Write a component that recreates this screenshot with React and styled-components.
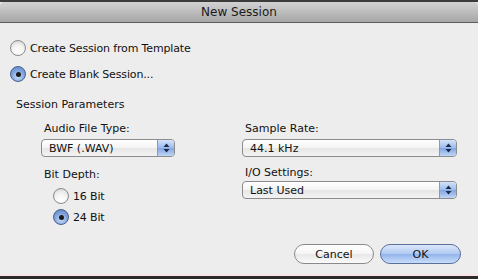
import styled, { createGlobalStyle } from "styled-components";

const GlobalStyle = createGlobalStyle`
  html, body { margin: 0; padding: 0; background: #ededed; }
  body { font-family: "DejaVu Sans", "Liberation Sans", sans-serif; }
`;

const Window = styled.div`
  width: 478px;
  height: 279px;
  display: flex;
  flex-direction: column;
  background: #ededed;
  overflow: hidden;
`;

const TopStrip = styled.div`
  height: 2px;
  background: #3c3c3c;
`;

const TitleBar = styled.div`
  height: 20px;
  display: flex;
  align-items: center;
  justify-content: center;
  background: linear-gradient(#d2d2d2, #a7a7a7);
  border-bottom: 1px solid #5c5c5c;
  border-radius: 4px 4px 0 0;
  font-size: 12px;
  color: #1a1a1a;
`;

const Body = styled.div`
  flex: 1;
  display: flex;
  flex-direction: column;
  padding: 17px 17px 0 10px;
`;

const RadioRow = styled.label`
  display: flex;
  align-items: center;
  gap: 4px;
  height: 16px;
  margin-bottom: ${(p) => p.mb || 0}px;
  font-size: 11px;
  letter-spacing: -0.15px;
  color: #111;
`;

const Radio = styled.span`
  width: 14px;
  height: 14px;
  border-radius: 50%;
  border: 1px solid ${(p) => (p.on ? "#4a5f8a" : "#8a8a8a")};
  background: ${(p) =>
    p.on
      ? "radial-gradient(circle at 50% 70%, #c4dcf8 0%, #7fa2de 55%, #5a80c6 100%)"
      : "radial-gradient(circle at 50% 75%, #ffffff 0%, #f2f2f2 50%, #cfcfcf 100%)"};
  display: flex;
  align-items: center;
  justify-content: center;
  flex-shrink: 0;
  &::after {
    content: "";
    width: 5px;
    height: 5px;
    border-radius: 50%;
    background: #1b1b1b;
    display: ${(p) => (p.on ? "block" : "none")};
  }
`;

const SectionLabel = styled.div`
  margin: 16px 0 0 6px;
  height: 14px;
  line-height: 14px;
  font-size: 11px;
  color: #111;
`;

const Columns = styled.div`
  display: grid;
  grid-template-columns: 134px 215px;
  column-gap: 67px;
  margin: 10px 0 0 31px;
`;

const Column = styled.div`
  display: flex;
  flex-direction: column;
`;

const FieldLabel = styled.div`
  height: 14px;
  line-height: 14px;
  margin: ${(p) => p.mt || 0}px 0 ${(p) => (p.mb ?? 3)}px 3px;
  font-size: 11px;
  color: #111;
`;

const Select = styled.div`
  height: 16px;
  display: flex;
  align-items: center;
  border: 1px solid #8c8c8c;
  border-radius: 4px;
  background: linear-gradient(#ffffff, #f4f4f4 50%, #e6e6e6 51%, #f3f3f3);
  overflow: hidden;
`;

const SelectText = styled.span`
  flex: 1;
  padding-left: 7px;
  font-size: 11px;
  color: #111;
`;

const Stepper = styled.span`
  width: 16px;
  height: 100%;
  border-left: 1px solid #8799be;
  background: linear-gradient(#d3e3f9, #9bbaec 50%, #80a5e2 51%, #c0d6f6);
  display: flex;
  align-items: center;
  justify-content: center;
`;

const Options = styled.div`
  display: flex;
  flex-direction: column;
  gap: 5px;
  margin: 3px 0 0 12px;
`;

const ButtonRow = styled.div`
  display: flex;
  justify-content: flex-end;
  gap: 6px;
  margin-top: 19px;
`;

const Button = styled.button`
  width: ${(p) => p.w}px;
  height: 20px;
  border-radius: 10px;
  font-family: inherit;
  font-size: 11px;
  color: #111;
  padding: 0;
  border: 1px solid ${(p) => (p.primary ? "#5a6f9c" : "#8a8a8a")};
  background: ${(p) =>
    p.primary
      ? "linear-gradient(#dbe8fb, #afc9f1 50%, #92b3ec 51%, #c8ddf9)"
      : "linear-gradient(#ffffff, #f5f5f5 50%, #e8e8e8 51%, #fafafa)"};
`;

const BottomEdge = styled.div`
  margin-top: auto;
  height: 2px;
  background: #f6e4e8;
`;

const BottomStrip = styled.div`
  height: 3px;
  background: #2e2a2a;
`;

function Arrows() {
  return (
    <svg width="7" height="10" viewBox="0 0 7 10">
      <path d="M3.5 0.5 L6.5 4 L0.5 4 Z" fill="#1b2b4a" />
      <path d="M3.5 9.5 L6.5 6 L0.5 6 Z" fill="#1b2b4a" />
    </svg>
  );
}

function PopUp({ value }) {
  return (
    <Select>
      <SelectText>{value}</SelectText>
      <Stepper>
        <Arrows />
      </Stepper>
    </Select>
  );
}

export default function App() {
  return (
    <Window>
      <GlobalStyle />
      <TopStrip />
      <TitleBar>New Session</TitleBar>
      <Body>
        <RadioRow mb={10}>
          <Radio />
          Create Session from Template
        </RadioRow>
        <RadioRow>
          <Radio on />
          Create Blank Session...
        </RadioRow>
        <SectionLabel>Session Parameters</SectionLabel>
        <Columns>
          <Column>
            <FieldLabel>Audio File Type:</FieldLabel>
            <PopUp value="BWF (.WAV)" />
            <FieldLabel mt={11}>Bit Depth:</FieldLabel>
            <Options>
              <RadioRow>
                <Radio />
                16 Bit
              </RadioRow>
              <RadioRow>
                <Radio on />
                24 Bit
              </RadioRow>
            </Options>
          </Column>
          <Column>
            <FieldLabel>Sample Rate:</FieldLabel>
            <PopUp value="44.1 kHz" />
            <FieldLabel mt={9} mb={1}>I/O Settings:</FieldLabel>
            <PopUp value="Last Used" />
          </Column>
        </Columns>
        <ButtonRow>
          <Button w={80}>Cancel</Button>
          <Button w={81} primary>
            OK
          </Button>
        </ButtonRow>
      </Body>
      <BottomEdge />
      <BottomStrip />
    </Window>
  );
}
